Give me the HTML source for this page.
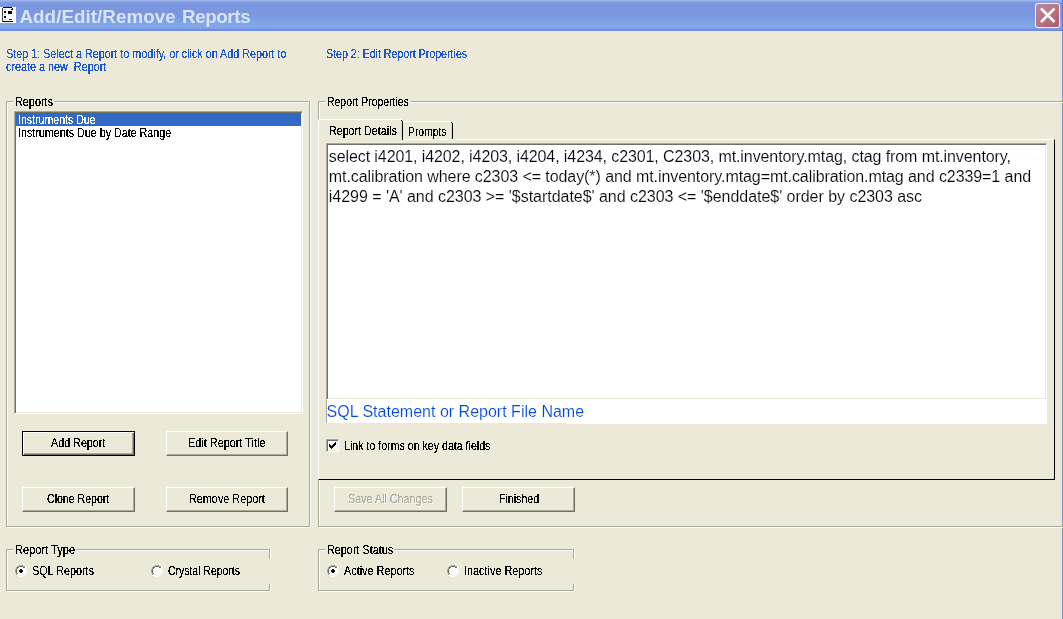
<!DOCTYPE html>
<html><head><meta charset="utf-8"><title>Add/Edit/Remove Reports</title>
<style>
html,body{margin:0;padding:0}
body{width:1063px;height:619px;overflow:hidden;background:#ece9d8;position:relative;font-family:"Liberation Sans",sans-serif;font-size:11px;color:#000}
.abs{position:absolute}
.t{position:absolute;white-space:pre;line-height:13px}
.m{position:absolute;white-space:pre;font-size:13px;line-height:16px;transform-origin:0 0}
.blue{color:#1c58cc}
.wh{color:#fff}
.dis{color:#aca899;text-shadow:1px 1px 0 #fff}
#title{left:0;top:0;width:1063px;height:31px;background:linear-gradient(to bottom,#a6bcee 0,#8ba7e6 1.5px,#7b97e0 3px,#7a96df 6px,#7a97e0 16px,#80a3e7 22px,#82a8ea 25px,#80a5e8 28px,#7691e1 29.5px,#6b85da 31px)}
#title .txt{top:6px;font:bold 18.75px/21px "Liberation Sans",sans-serif;color:#d8e4f8;letter-spacing:.35px}
#rb{left:1062px;top:0;width:1px;height:619px;background:linear-gradient(to bottom,#6176d2 0,#6176d2 31px,#7b93e0 31px,#7b93e0 100%)}
#close{left:1035px;top:3px;width:23px;height:23px;border:1px solid rgba(255,255,255,.9);border-radius:3px;background:linear-gradient(135deg,#b98aa5,#b5707f 60%,#a9586a)}
.gbw{position:absolute;border:1px solid #fff}
.gbg{position:absolute;border:1px solid #aca899}
.mask{position:absolute;background:#ece9d8}
.btn{position:absolute;box-sizing:border-box;border:1px solid;border-color:#fff #716f64 #716f64 #fff;box-shadow:inset -1px -1px 0 #aca899;background:#ece9d8}
.btn.def{border:1px solid #000;box-shadow:inset 1px 1px 0 #fff, inset -1px -1px 0 #716f64, inset -2px -2px 0 #aca899}
.sunk{position:absolute;box-sizing:border-box;background:#fff;border:1px solid;border-color:#aca899 #fff #fff #aca899;box-shadow:inset 1px 1px 0 #716f64, inset -1px -1px 0 #ece9d8}
.fx{position:absolute;left:0;top:0;width:1063px;height:619px;filter:url(#th)}
.sq{font-size:16px;line-height:20px}
#w{position:absolute;left:0;top:0;width:1063px;height:619px;will-change:transform}
.sq,.sl{-webkit-text-stroke:.15px #fff}
</style></head><body>
<div id="w">
<svg width="0" height="0" style="position:absolute"><filter id="th" x="0" y="0" width="100%" height="100%" color-interpolation-filters="sRGB"><feComponentTransfer><feFuncA type="discrete" tableValues="0 0 0 1 1 1 1 1"/></feComponentTransfer></filter></svg>
<div id="title" class="abs">
<svg class="abs" style="left:0;top:7px" width="16" height="16" viewBox="0 0 16 16" shape-rendering="crispEdges"><rect width="16" height="16" fill="#fff"/><rect x="3" y="0" width="9" height="1" fill="#000"/><rect x="2" y="1" width="1" height="14" fill="#444"/><rect x="3" y="14" width="10" height="1" fill="#000"/><rect x="12" y="1" width="1" height="2" fill="#000"/><rect x="11" y="2" width="1" height="1" fill="#000"/><rect x="4" y="2" width="2" height="1" fill="#ccc"/><rect x="4" y="7" width="2" height="1" fill="#ccc"/><rect x="4" y="12" width="2" height="1" fill="#ccc"/><rect x="4" y="4" width="2" height="2" fill="#000"/><rect x="4" y="9" width="2" height="2" fill="#000"/><rect x="8" y="4" width="4" height="3" fill="#000"/><rect x="9" y="12" width="3" height="1" fill="#a00000"/></svg>
<div class="t txt" style="left:19.5px;letter-spacing:.06px">Add/Edit/Remove</div><div class="t txt" style="left:182px;letter-spacing:-.38px">Reports</div>
<div id="close" class="abs"><svg width="23" height="23" viewBox="0 0 23 23" style="position:absolute;left:0;top:0"><path d="M5 4.5 L18.5 18 M18.5 4.5 L5 18" stroke="#fff" stroke-width="2.6" fill="none"/></svg></div>
</div>
<div id="rb" class="abs"></div>



<div class="gbw" style="left:7px;top:102px;width:302px;height:424px"></div><div class="gbg" style="left:6px;top:101px;width:302px;height:424px"></div>
<div class="mask" style="left:13px;top:95px;width:41px;height:12px"></div>

<div class="sunk" style="left:14px;top:111px;width:289px;height:303px"></div>
<div class="abs" style="left:16px;top:113px;width:285px;height:13px;background:#316ac5"></div>


<div class="btn def" style="left:22px;top:431px;width:113px;height:25px"></div>

<div class="btn " style="left:166px;top:431px;width:122px;height:25px"></div>

<div class="btn " style="left:22px;top:487px;width:113px;height:25px"></div>

<div class="btn " style="left:166px;top:487px;width:122px;height:25px"></div>

<div class="gbw" style="left:319px;top:102px;width:758px;height:424px"></div><div class="gbg" style="left:318px;top:101px;width:758px;height:424px"></div>
<div class="mask" style="left:325px;top:95px;width:86px;height:12px"></div>

<div class="abs" style="left:318px;top:139px;width:737px;height:341px;background:#ece9d8;border-left:1px solid #fff;border-top:1px solid #fff;border-right:1px solid #000;border-bottom:1px solid #000;box-sizing:border-box"></div>
<div class="abs" style="left:318px;top:119px;width:84px;height:21px;background:#ece9d8;border-left:1px solid #fff;border-top:1px solid #fff;box-sizing:border-box;border-radius:2px 0 0 0"></div>
<div class="abs" style="left:401px;top:121px;width:1px;height:19px;background:#dad7c6"></div><div class="abs" style="left:402px;top:121px;width:1px;height:19px;background:#000"></div><div class="abs" style="left:401px;top:120px;width:1px;height:1px;background:#000"></div>
<div class="abs" style="left:403px;top:121px;width:48px;height:1px;background:#fff"></div>
<div class="abs" style="left:451px;top:123px;width:1px;height:16px;background:#dad7c6"></div><div class="abs" style="left:452px;top:123px;width:1px;height:16px;background:#000"></div><div class="abs" style="left:451px;top:122px;width:1px;height:1px;background:#000"></div>


<div class="sunk" style="left:326px;top:143px;width:721px;height:257px"></div>
<div class="t sq" style="left:328.8px;top:147px;letter-spacing:-0.095px">select i4201, i4202, i4203, i4204, i4234, c2301, C2303, mt.inventory.mtag, ctag from mt.inventory,</div>
<div class="t sq" style="left:328.8px;top:167px;letter-spacing:-0.075px">mt.calibration where c2303 &lt;= today(*) and mt.inventory.mtag=mt.calibration.mtag and c2339=1 and</div>
<div class="t sq" style="left:328.8px;top:187px;letter-spacing:-0.035px">i4299 = 'A' and c2303 &gt;= '$startdate$' and c2303 &lt;= '$enddate$' order by c2303 asc</div>
<div class="abs" style="left:326px;top:400px;width:720px;height:23px;background:#fff;border-left:1px solid #aca899"></div><div class="abs" style="left:567px;top:400px;width:480px;height:24px;background:#fff"></div>
<div class="t sl" style="left:326.5px;top:403px;font-size:16px;line-height:18px;color:#0046e8;letter-spacing:0.01px">SQL Statement or Report File Name</div>
<div class="sunk" style="left:326px;top:439px;width:13px;height:13px"></div>
<svg class="abs" style="left:329px;top:442px" width="7" height="7" viewBox="0 0 7 7" shape-rendering="crispEdges"><rect x="6" y="0" width="1" height="1" fill="#000"/><rect x="5" y="1" width="2" height="1" fill="#000"/><rect x="0" y="2" width="1" height="1" fill="#000"/><rect x="4" y="2" width="3" height="1" fill="#000"/><rect x="0" y="3" width="2" height="1" fill="#000"/><rect x="3" y="3" width="3" height="1" fill="#000"/><rect x="0" y="4" width="5" height="1" fill="#000"/><rect x="1" y="5" width="3" height="1" fill="#000"/><rect x="2" y="6" width="1" height="1" fill="#000"/></svg>

<div class="btn " style="left:334px;top:487px;width:113px;height:25px"></div>

<div class="btn " style="left:462px;top:487px;width:113px;height:25px"></div>

<div class="gbw" style="left:7px;top:550px;width:262px;height:40px"></div><div class="gbg" style="left:6px;top:549px;width:262px;height:40px"></div>
<div class="mask" style="left:265px;top:559px;width:8px;height:25px"></div>
<div class="mask" style="left:13px;top:543px;width:63px;height:12px"></div>

<svg class="abs" style="left:15px;top:565px" width="12" height="12" viewBox="0 0 12 12" shape-rendering="crispEdges"><rect x="4" y="0" width="4" height="1" fill="#aca899"/><rect x="2" y="1" width="2" height="1" fill="#aca899"/><rect x="4" y="1" width="4" height="1" fill="#716f64"/><rect x="8" y="1" width="2" height="1" fill="#aca899"/><rect x="1" y="2" width="1" height="1" fill="#aca899"/><rect x="2" y="2" width="2" height="1" fill="#716f64"/><rect x="4" y="2" width="4" height="1" fill="#fff"/><rect x="8" y="2" width="2" height="1" fill="#716f64"/><rect x="10" y="2" width="1" height="1" fill="#fff"/><rect x="1" y="3" width="1" height="1" fill="#aca899"/><rect x="2" y="3" width="1" height="1" fill="#716f64"/><rect x="3" y="3" width="6" height="1" fill="#fff"/><rect x="9" y="3" width="1" height="1" fill="#f1efe2"/><rect x="10" y="3" width="1" height="1" fill="#fff"/><rect x="0" y="4" width="1" height="1" fill="#aca899"/><rect x="1" y="4" width="1" height="1" fill="#716f64"/><rect x="2" y="4" width="8" height="1" fill="#fff"/><rect x="10" y="4" width="1" height="1" fill="#f1efe2"/><rect x="11" y="4" width="1" height="1" fill="#fff"/><rect x="0" y="5" width="1" height="1" fill="#aca899"/><rect x="1" y="5" width="1" height="1" fill="#716f64"/><rect x="2" y="5" width="8" height="1" fill="#fff"/><rect x="10" y="5" width="1" height="1" fill="#f1efe2"/><rect x="11" y="5" width="1" height="1" fill="#fff"/><rect x="0" y="6" width="1" height="1" fill="#aca899"/><rect x="1" y="6" width="1" height="1" fill="#716f64"/><rect x="2" y="6" width="8" height="1" fill="#fff"/><rect x="10" y="6" width="1" height="1" fill="#f1efe2"/><rect x="11" y="6" width="1" height="1" fill="#fff"/><rect x="0" y="7" width="1" height="1" fill="#aca899"/><rect x="1" y="7" width="1" height="1" fill="#716f64"/><rect x="2" y="7" width="8" height="1" fill="#fff"/><rect x="10" y="7" width="1" height="1" fill="#f1efe2"/><rect x="11" y="7" width="1" height="1" fill="#fff"/><rect x="1" y="8" width="1" height="1" fill="#aca899"/><rect x="2" y="8" width="1" height="1" fill="#716f64"/><rect x="3" y="8" width="6" height="1" fill="#fff"/><rect x="9" y="8" width="1" height="1" fill="#f1efe2"/><rect x="10" y="8" width="1" height="1" fill="#fff"/><rect x="1" y="9" width="1" height="1" fill="#aca899"/><rect x="2" y="9" width="2" height="1" fill="#f1efe2"/><rect x="4" y="9" width="4" height="1" fill="#fff"/><rect x="8" y="9" width="2" height="1" fill="#f1efe2"/><rect x="10" y="9" width="1" height="1" fill="#fff"/><rect x="2" y="10" width="2" height="1" fill="#fff"/><rect x="4" y="10" width="4" height="1" fill="#f1efe2"/><rect x="8" y="10" width="2" height="1" fill="#fff"/><rect x="4" y="11" width="4" height="1" fill="#fff"/><rect x="5" y="4" width="2" height="4" fill="#000"/><rect x="4" y="5" width="4" height="2" fill="#000"/></svg>

<svg class="abs" style="left:151px;top:565px" width="12" height="12" viewBox="0 0 12 12" shape-rendering="crispEdges"><rect x="4" y="0" width="4" height="1" fill="#aca899"/><rect x="2" y="1" width="2" height="1" fill="#aca899"/><rect x="4" y="1" width="4" height="1" fill="#716f64"/><rect x="8" y="1" width="2" height="1" fill="#aca899"/><rect x="1" y="2" width="1" height="1" fill="#aca899"/><rect x="2" y="2" width="2" height="1" fill="#716f64"/><rect x="4" y="2" width="4" height="1" fill="#fff"/><rect x="8" y="2" width="2" height="1" fill="#716f64"/><rect x="10" y="2" width="1" height="1" fill="#fff"/><rect x="1" y="3" width="1" height="1" fill="#aca899"/><rect x="2" y="3" width="1" height="1" fill="#716f64"/><rect x="3" y="3" width="6" height="1" fill="#fff"/><rect x="9" y="3" width="1" height="1" fill="#f1efe2"/><rect x="10" y="3" width="1" height="1" fill="#fff"/><rect x="0" y="4" width="1" height="1" fill="#aca899"/><rect x="1" y="4" width="1" height="1" fill="#716f64"/><rect x="2" y="4" width="8" height="1" fill="#fff"/><rect x="10" y="4" width="1" height="1" fill="#f1efe2"/><rect x="11" y="4" width="1" height="1" fill="#fff"/><rect x="0" y="5" width="1" height="1" fill="#aca899"/><rect x="1" y="5" width="1" height="1" fill="#716f64"/><rect x="2" y="5" width="8" height="1" fill="#fff"/><rect x="10" y="5" width="1" height="1" fill="#f1efe2"/><rect x="11" y="5" width="1" height="1" fill="#fff"/><rect x="0" y="6" width="1" height="1" fill="#aca899"/><rect x="1" y="6" width="1" height="1" fill="#716f64"/><rect x="2" y="6" width="8" height="1" fill="#fff"/><rect x="10" y="6" width="1" height="1" fill="#f1efe2"/><rect x="11" y="6" width="1" height="1" fill="#fff"/><rect x="0" y="7" width="1" height="1" fill="#aca899"/><rect x="1" y="7" width="1" height="1" fill="#716f64"/><rect x="2" y="7" width="8" height="1" fill="#fff"/><rect x="10" y="7" width="1" height="1" fill="#f1efe2"/><rect x="11" y="7" width="1" height="1" fill="#fff"/><rect x="1" y="8" width="1" height="1" fill="#aca899"/><rect x="2" y="8" width="1" height="1" fill="#716f64"/><rect x="3" y="8" width="6" height="1" fill="#fff"/><rect x="9" y="8" width="1" height="1" fill="#f1efe2"/><rect x="10" y="8" width="1" height="1" fill="#fff"/><rect x="1" y="9" width="1" height="1" fill="#aca899"/><rect x="2" y="9" width="2" height="1" fill="#f1efe2"/><rect x="4" y="9" width="4" height="1" fill="#fff"/><rect x="8" y="9" width="2" height="1" fill="#f1efe2"/><rect x="10" y="9" width="1" height="1" fill="#fff"/><rect x="2" y="10" width="2" height="1" fill="#fff"/><rect x="4" y="10" width="4" height="1" fill="#f1efe2"/><rect x="8" y="10" width="2" height="1" fill="#fff"/><rect x="4" y="11" width="4" height="1" fill="#fff"/></svg>

<div class="gbw" style="left:319px;top:550px;width:254px;height:40px"></div><div class="gbg" style="left:318px;top:549px;width:254px;height:40px"></div>
<div class="mask" style="left:569px;top:559px;width:8px;height:25px"></div>
<div class="mask" style="left:325px;top:543px;width:69px;height:12px"></div>

<svg class="abs" style="left:327px;top:565px" width="12" height="12" viewBox="0 0 12 12" shape-rendering="crispEdges"><rect x="4" y="0" width="4" height="1" fill="#aca899"/><rect x="2" y="1" width="2" height="1" fill="#aca899"/><rect x="4" y="1" width="4" height="1" fill="#716f64"/><rect x="8" y="1" width="2" height="1" fill="#aca899"/><rect x="1" y="2" width="1" height="1" fill="#aca899"/><rect x="2" y="2" width="2" height="1" fill="#716f64"/><rect x="4" y="2" width="4" height="1" fill="#fff"/><rect x="8" y="2" width="2" height="1" fill="#716f64"/><rect x="10" y="2" width="1" height="1" fill="#fff"/><rect x="1" y="3" width="1" height="1" fill="#aca899"/><rect x="2" y="3" width="1" height="1" fill="#716f64"/><rect x="3" y="3" width="6" height="1" fill="#fff"/><rect x="9" y="3" width="1" height="1" fill="#f1efe2"/><rect x="10" y="3" width="1" height="1" fill="#fff"/><rect x="0" y="4" width="1" height="1" fill="#aca899"/><rect x="1" y="4" width="1" height="1" fill="#716f64"/><rect x="2" y="4" width="8" height="1" fill="#fff"/><rect x="10" y="4" width="1" height="1" fill="#f1efe2"/><rect x="11" y="4" width="1" height="1" fill="#fff"/><rect x="0" y="5" width="1" height="1" fill="#aca899"/><rect x="1" y="5" width="1" height="1" fill="#716f64"/><rect x="2" y="5" width="8" height="1" fill="#fff"/><rect x="10" y="5" width="1" height="1" fill="#f1efe2"/><rect x="11" y="5" width="1" height="1" fill="#fff"/><rect x="0" y="6" width="1" height="1" fill="#aca899"/><rect x="1" y="6" width="1" height="1" fill="#716f64"/><rect x="2" y="6" width="8" height="1" fill="#fff"/><rect x="10" y="6" width="1" height="1" fill="#f1efe2"/><rect x="11" y="6" width="1" height="1" fill="#fff"/><rect x="0" y="7" width="1" height="1" fill="#aca899"/><rect x="1" y="7" width="1" height="1" fill="#716f64"/><rect x="2" y="7" width="8" height="1" fill="#fff"/><rect x="10" y="7" width="1" height="1" fill="#f1efe2"/><rect x="11" y="7" width="1" height="1" fill="#fff"/><rect x="1" y="8" width="1" height="1" fill="#aca899"/><rect x="2" y="8" width="1" height="1" fill="#716f64"/><rect x="3" y="8" width="6" height="1" fill="#fff"/><rect x="9" y="8" width="1" height="1" fill="#f1efe2"/><rect x="10" y="8" width="1" height="1" fill="#fff"/><rect x="1" y="9" width="1" height="1" fill="#aca899"/><rect x="2" y="9" width="2" height="1" fill="#f1efe2"/><rect x="4" y="9" width="4" height="1" fill="#fff"/><rect x="8" y="9" width="2" height="1" fill="#f1efe2"/><rect x="10" y="9" width="1" height="1" fill="#fff"/><rect x="2" y="10" width="2" height="1" fill="#fff"/><rect x="4" y="10" width="4" height="1" fill="#f1efe2"/><rect x="8" y="10" width="2" height="1" fill="#fff"/><rect x="4" y="11" width="4" height="1" fill="#fff"/><rect x="5" y="4" width="2" height="4" fill="#000"/><rect x="4" y="5" width="4" height="2" fill="#000"/></svg>

<svg class="abs" style="left:447px;top:565px" width="12" height="12" viewBox="0 0 12 12" shape-rendering="crispEdges"><rect x="4" y="0" width="4" height="1" fill="#aca899"/><rect x="2" y="1" width="2" height="1" fill="#aca899"/><rect x="4" y="1" width="4" height="1" fill="#716f64"/><rect x="8" y="1" width="2" height="1" fill="#aca899"/><rect x="1" y="2" width="1" height="1" fill="#aca899"/><rect x="2" y="2" width="2" height="1" fill="#716f64"/><rect x="4" y="2" width="4" height="1" fill="#fff"/><rect x="8" y="2" width="2" height="1" fill="#716f64"/><rect x="10" y="2" width="1" height="1" fill="#fff"/><rect x="1" y="3" width="1" height="1" fill="#aca899"/><rect x="2" y="3" width="1" height="1" fill="#716f64"/><rect x="3" y="3" width="6" height="1" fill="#fff"/><rect x="9" y="3" width="1" height="1" fill="#f1efe2"/><rect x="10" y="3" width="1" height="1" fill="#fff"/><rect x="0" y="4" width="1" height="1" fill="#aca899"/><rect x="1" y="4" width="1" height="1" fill="#716f64"/><rect x="2" y="4" width="8" height="1" fill="#fff"/><rect x="10" y="4" width="1" height="1" fill="#f1efe2"/><rect x="11" y="4" width="1" height="1" fill="#fff"/><rect x="0" y="5" width="1" height="1" fill="#aca899"/><rect x="1" y="5" width="1" height="1" fill="#716f64"/><rect x="2" y="5" width="8" height="1" fill="#fff"/><rect x="10" y="5" width="1" height="1" fill="#f1efe2"/><rect x="11" y="5" width="1" height="1" fill="#fff"/><rect x="0" y="6" width="1" height="1" fill="#aca899"/><rect x="1" y="6" width="1" height="1" fill="#716f64"/><rect x="2" y="6" width="8" height="1" fill="#fff"/><rect x="10" y="6" width="1" height="1" fill="#f1efe2"/><rect x="11" y="6" width="1" height="1" fill="#fff"/><rect x="0" y="7" width="1" height="1" fill="#aca899"/><rect x="1" y="7" width="1" height="1" fill="#716f64"/><rect x="2" y="7" width="8" height="1" fill="#fff"/><rect x="10" y="7" width="1" height="1" fill="#f1efe2"/><rect x="11" y="7" width="1" height="1" fill="#fff"/><rect x="1" y="8" width="1" height="1" fill="#aca899"/><rect x="2" y="8" width="1" height="1" fill="#716f64"/><rect x="3" y="8" width="6" height="1" fill="#fff"/><rect x="9" y="8" width="1" height="1" fill="#f1efe2"/><rect x="10" y="8" width="1" height="1" fill="#fff"/><rect x="1" y="9" width="1" height="1" fill="#aca899"/><rect x="2" y="9" width="2" height="1" fill="#f1efe2"/><rect x="4" y="9" width="4" height="1" fill="#fff"/><rect x="8" y="9" width="2" height="1" fill="#f1efe2"/><rect x="10" y="9" width="1" height="1" fill="#fff"/><rect x="2" y="10" width="2" height="1" fill="#fff"/><rect x="4" y="10" width="4" height="1" fill="#f1efe2"/><rect x="8" y="10" width="2" height="1" fill="#fff"/><rect x="4" y="11" width="4" height="1" fill="#fff"/></svg>

<div class="fx"><div class="m blue" style="left:5.97px;top:46px;transform:scaleX(0.8285)">Step 1: Select a Report to modify, or click on Add Report to</div>
<div class="m blue" style="left:5.77px;top:59px;transform:scaleX(0.8308)">create a new  Report</div>
<div class="m blue" style="left:325.98px;top:46px;transform:scaleX(0.8170)">Step 2: Edit Report Properties</div>
<div class="m" style="left:14.67px;top:94px;transform:scaleX(0.8341)">Reports</div>
<div class="m wh" style="left:17.69px;top:112px;transform:scaleX(0.8138)">Instruments Due</div>
<div class="m" style="left:17.68px;top:125px;transform:scaleX(0.8250)">Instruments Due by Date Range</div>
<div class="m" style="left:50.70px;top:435px;transform:scaleX(0.8273)">Add Report</div>
<div class="m" style="left:187.56px;top:435px;transform:scaleX(0.8374)">Edit Report Title</div>
<div class="m" style="left:46.69px;top:491px;transform:scaleX(0.8132)">Clone Report</div>
<div class="m" style="left:188.77px;top:491px;transform:scaleX(0.8333)">Remove Report</div>
<div class="m" style="left:326.90px;top:94px;transform:scaleX(0.8030)">Report Properties</div>
<div class="m" style="left:328.68px;top:123px;transform:scaleX(0.8222)">Report Details</div>
<div class="m" style="left:408.00px;top:124px;transform:scaleX(0.7957)">Prompts</div>
<div class="m" style="left:343.68px;top:438px;transform:scaleX(0.8169)">Link to forms on key data fields</div>
<div class="m dis" style="left:347.67px;top:491px;transform:scaleX(0.8267)">Save All Changes</div>
<div class="m" style="left:498.88px;top:491px;transform:scaleX(0.8170)">Finished</div>
<div class="m" style="left:14.65px;top:542px;transform:scaleX(0.8507)">Report Type</div>
<div class="m" style="left:31.87px;top:563px;transform:scaleX(0.8301)">SQL Reports</div>
<div class="m" style="left:167.80px;top:563px;transform:scaleX(0.8023)">Crystal Reports</div>
<div class="m" style="left:326.57px;top:542px;transform:scaleX(0.8333)">Report Status</div>
<div class="m" style="left:344.20px;top:563px;transform:scaleX(0.8345)">Active Reports</div>
<div class="m" style="left:463.56px;top:563px;transform:scaleX(0.8355)">Inactive Reports</div></div>
</div>
</body></html>
